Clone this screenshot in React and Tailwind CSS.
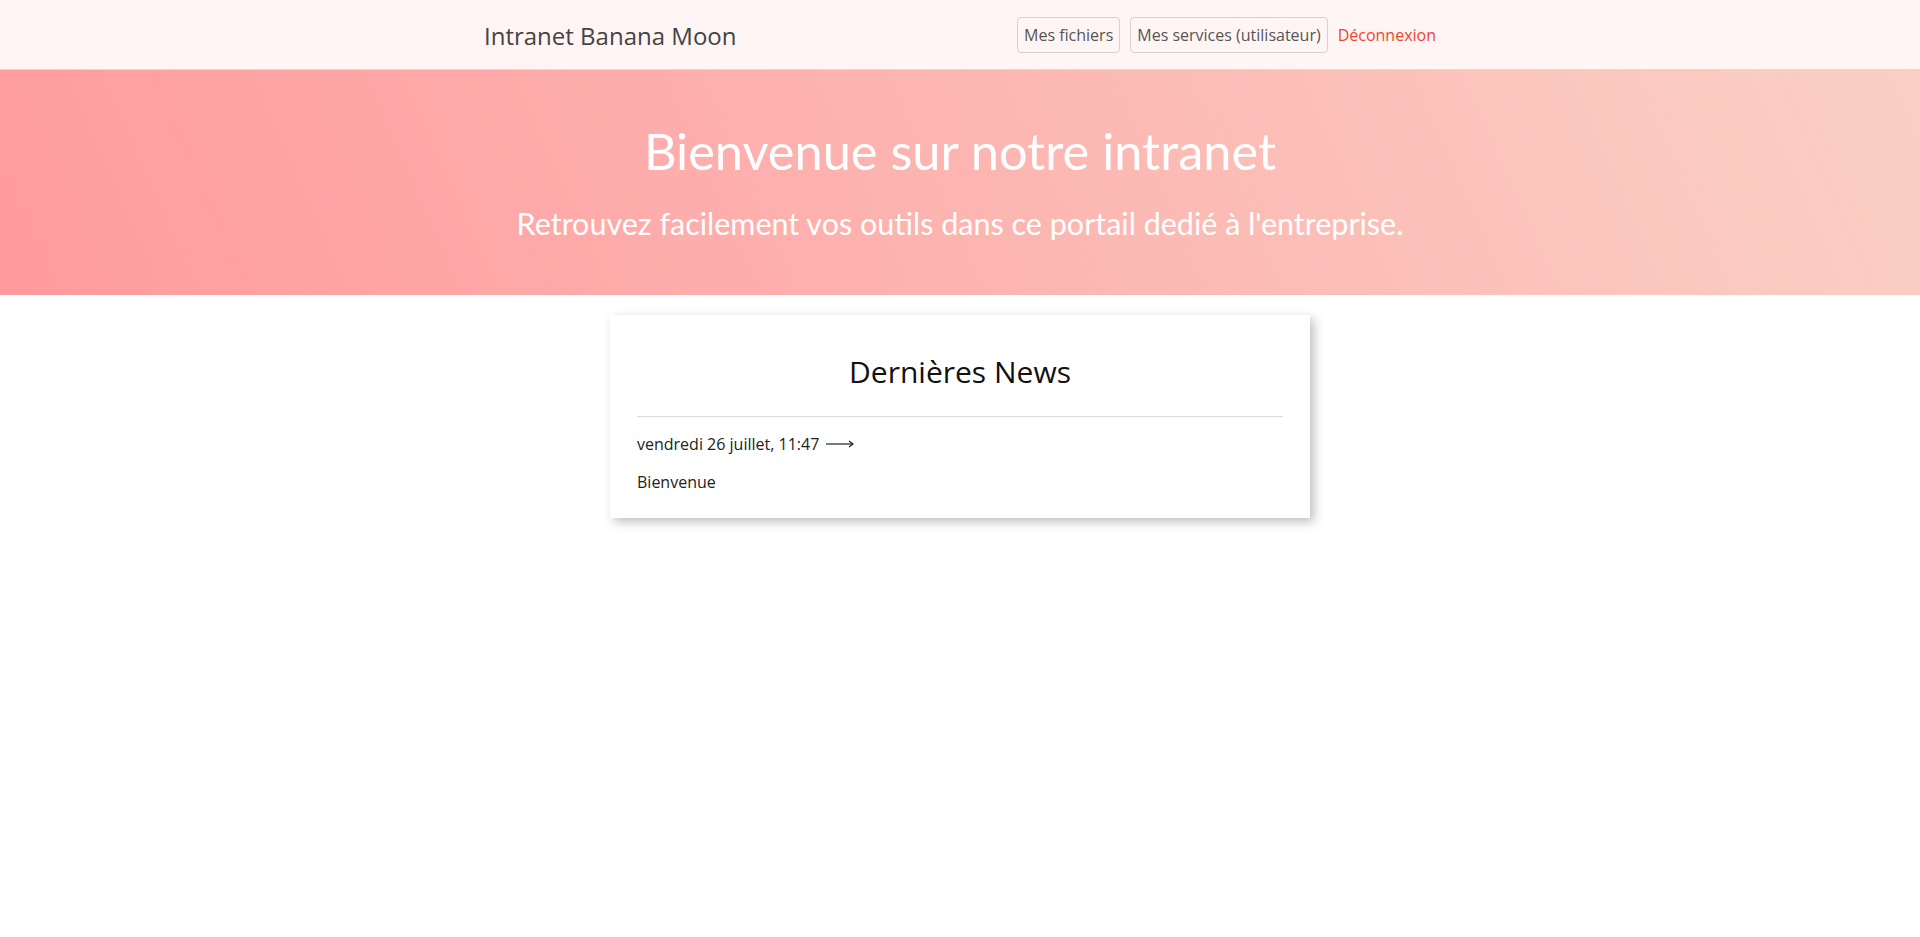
export default function App() {
  const links = [{ label: "Mes fichiers" }, { label: "Mes services (utilisateur)" }];

  return (
    <div className="min-h-screen bg-white font-['Open_Sans',sans-serif]">
      <header className="h-[70px] bg-[#fff5f4] border-b border-[#dcdcdc]">
        <div className="max-w-[952px] mx-auto h-full flex items-center justify-between">
          <a className="text-[24px] text-[#444] leading-none pt-[2px]">Intranet Banana Moon</a>
          <nav className="flex items-center gap-[10px] text-[16px] pt-[1px]">
            {links.map((l) => (
              <a
                key={l.label}
                className="h-[36px] px-[6px] flex items-center border border-[#d2d2d2] rounded-[4px] text-[#555]"
              >
                {l.label}
              </a>
            ))}
            <a className="text-[#f2432f]">Déconnexion</a>
          </nav>
        </div>
      </header>

      <section className="h-[225px] bg-[linear-gradient(66deg,#ff9a9e,#fad0c4)] flex flex-col items-center text-white font-['Lato',sans-serif]">
        <h1 className="mt-[51px] text-[50.5px] leading-[60px]">Bienvenue sur notre intranet</h1>
        <p className="mt-[23px] text-[30.5px] leading-[38px]">
          Retrouvez facilement vos outils dans ce portail dedié à l'entreprise.
        </p>
      </section>

      <div className="w-[700px] mx-auto mt-[20px] bg-white shadow-[4px_4px_10px_rgba(0,0,0,0.25)] px-[27px] pt-[27px] pb-[24px] text-[#222]">
        <h2 className="mt-[10px] text-[30px] leading-[40px] text-center text-[#111]">Dernières News</h2>
        <hr className="mt-[24px] border-0 border-t border-[#dcdcdc]" />
        <div className="mt-[15px] flex items-center gap-[6px] text-[16px] leading-[24px]">
          <span>vendredi 26 juillet, 11:47</span>
          <svg width="30" height="10" viewBox="0 0 30 10" fill="none" stroke="#222" strokeWidth="1.2">
            <path d="M1 5h27" />
            <path d="M24 2l4 3-4 3" />
          </svg>
        </div>
        <p className="mt-[14px] text-[16px] leading-[24px]">Bienvenue</p>
      </div>
    </div>
  );
}
